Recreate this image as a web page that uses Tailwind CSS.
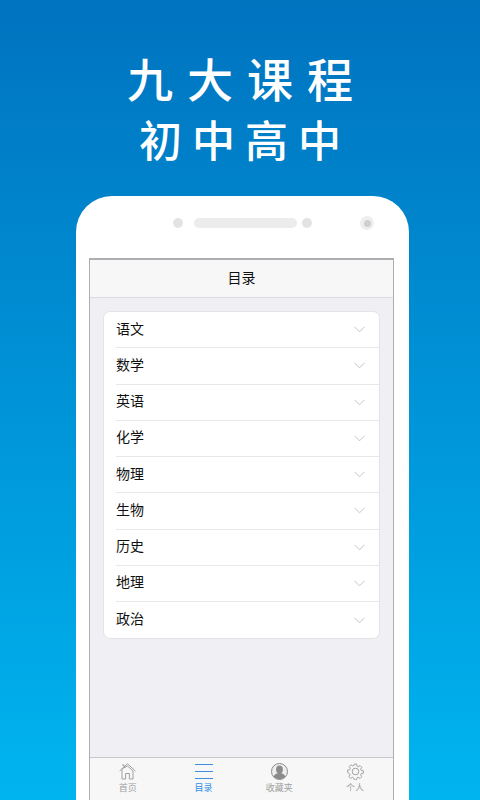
<!DOCTYPE html>
<html lang="zh">
<head>
<meta charset="UTF-8">
<script src="https://cdn.jsdelivr.net/npm/@tailwindcss/browser@4"></script>
<title>目录</title>
</head>
<body class="m-0 w-[480px] h-[800px] overflow-hidden bg-gradient-to-b from-[#0073bf] to-[#00b5ef] font-['Noto_Sans_CJK_SC','Liberation_Sans',sans-serif]">
    <!-- Heading -->
    <div class="flex flex-col items-center text-white h-[196px] pt-[44px]">
        <h1 class="text-[46px] leading-[66px] tracking-[14px] pl-[14px] font-medium">九大课程</h1>
        <h2 class="text-[43px] leading-[50px] tracking-[10px] pl-[10px] mt-[3px] font-medium">初中高中</h2>
    </div>

    <!-- Phone -->
    <div class="ml-[76px] w-[333px] h-[604px] bg-white rounded-t-[36px] flex flex-col">
        <div class="h-[62px] relative">
            <span class="absolute left-[97px] top-[22px] w-[10px] h-[10px] rounded-full bg-[#e3e3e3]"></span>
            <span class="absolute left-[118px] top-[22px] w-[103px] h-[10px] rounded-full bg-[#ececec]"></span>
            <span class="absolute left-[226px] top-[22px] w-[10px] h-[10px] rounded-full bg-[#e3e3e3]"></span>
            <span class="absolute left-[284px] top-[20px] w-[14px] h-[14px] rounded-full bg-[#eeeeee] flex items-center justify-center"><span class="w-[7px] h-[7px] rounded-full bg-[#cfcfcf]"></span></span>
        </div>

        <!-- Screen -->
        <div class="ml-[13px] w-[305px] flex-1 flex flex-col border-x border-t-2 border-[#aeaeb2] bg-[#efeff4]">
            <div class="h-[38px] pb-[3px] bg-[#f7f7f8] border-b border-[#dcdce0] flex items-center justify-center text-[14px] text-[#111]">目录</div>

            <div class="flex-1 px-[13px] pt-[13px]">
                <ul class="bg-white rounded-[7px] border border-[#e4e4e8] pl-[12px] text-[14px] text-[#111]">
                    <li class="h-[36.25px] flex items-center justify-between border-b border-[#e8e8e8] pr-[14px]"><span class="pb-[3px]">语文</span>
                        <svg width="11" height="7" viewBox="0 0 11 7" fill="none" stroke="#c4c4c8" stroke-width="1"><path d="M.5.8 5.5 5.8 10.5.8"/></svg>
                    </li>
                    <li class="h-[36.25px] flex items-center justify-between border-b border-[#e8e8e8] pr-[14px]"><span class="pb-[3px]">数学</span>
                        <svg width="11" height="7" viewBox="0 0 11 7" fill="none" stroke="#c4c4c8" stroke-width="1"><path d="M.5.8 5.5 5.8 10.5.8"/></svg>
                    </li>
                    <li class="h-[36.25px] flex items-center justify-between border-b border-[#e8e8e8] pr-[14px]"><span class="pb-[3px]">英语</span>
                        <svg width="11" height="7" viewBox="0 0 11 7" fill="none" stroke="#c4c4c8" stroke-width="1"><path d="M.5.8 5.5 5.8 10.5.8"/></svg>
                    </li>
                    <li class="h-[36.25px] flex items-center justify-between border-b border-[#e8e8e8] pr-[14px]"><span class="pb-[3px]">化学</span>
                        <svg width="11" height="7" viewBox="0 0 11 7" fill="none" stroke="#c4c4c8" stroke-width="1"><path d="M.5.8 5.5 5.8 10.5.8"/></svg>
                    </li>
                    <li class="h-[36.25px] flex items-center justify-between border-b border-[#e8e8e8] pr-[14px]"><span class="pb-[3px]">物理</span>
                        <svg width="11" height="7" viewBox="0 0 11 7" fill="none" stroke="#c4c4c8" stroke-width="1"><path d="M.5.8 5.5 5.8 10.5.8"/></svg>
                    </li>
                    <li class="h-[36.25px] flex items-center justify-between border-b border-[#e8e8e8] pr-[14px]"><span class="pb-[3px]">生物</span>
                        <svg width="11" height="7" viewBox="0 0 11 7" fill="none" stroke="#c4c4c8" stroke-width="1"><path d="M.5.8 5.5 5.8 10.5.8"/></svg>
                    </li>
                    <li class="h-[36.25px] flex items-center justify-between border-b border-[#e8e8e8] pr-[14px]"><span class="pb-[3px]">历史</span>
                        <svg width="11" height="7" viewBox="0 0 11 7" fill="none" stroke="#c4c4c8" stroke-width="1"><path d="M.5.8 5.5 5.8 10.5.8"/></svg>
                    </li>
                    <li class="h-[36.25px] flex items-center justify-between border-b border-[#e8e8e8] pr-[14px]"><span class="pb-[3px]">地理</span>
                        <svg width="11" height="7" viewBox="0 0 11 7" fill="none" stroke="#c4c4c8" stroke-width="1"><path d="M.5.8 5.5 5.8 10.5.8"/></svg>
                    </li>
                    <li class="h-[36.25px] flex items-center justify-between pr-[14px]"><span class="pb-[3px]">政治</span>
                        <svg width="11" height="7" viewBox="0 0 11 7" fill="none" stroke="#c4c4c8" stroke-width="1"><path d="M.5.8 5.5 5.8 10.5.8"/></svg>
                    </li>
                </ul>
            </div>

            <!-- Tab bar -->
            <div class="h-[43px] bg-[#f7f7f8] border-t border-[#c8c8cc] grid grid-cols-4 text-[9px] leading-[11px] text-[#a0a0a0]">
                <div class="flex flex-col items-center pt-[5px]">
                    <svg width="17" height="17" viewBox="0 0 17 17" fill="none" stroke="#a0a0a0" stroke-width="1"><path d="M.6 8 8.500 .8 16.400 8M3 5.800V16h3.600v-5.500h3.800V16H14V8M3 5.800 8.500 3 14 8M3 2h2v2.200"/></svg>
                    <span class="mt-[2px]">首页</span>
                </div>
                <div class="flex flex-col items-center pt-[5px] text-[#2e8ee8]">
                    <svg width="18" height="17" viewBox="0 0 18 17" fill="none" stroke="#3d8fe0" stroke-width="1"><path d="M0 1.500h18M0 8.500h18M0 15.500h18"/></svg>
                    <span class="mt-[2px]">目录</span>
                </div>
                <div class="flex flex-col items-center pt-[5px]">
                    <svg width="17" height="17" viewBox="0 0 17 17"><circle cx="8.500" cy="8.500" r="8" fill="#eee" stroke="#8a8a8a"/><ellipse cx="8.500" cy="6.500" rx="3.400" ry="3.900" fill="#8a8a8a"/><path d="M2.800 13.800c.4-2.600 2.800-3.800 5.700-3.800s5.300 1.200 5.700 3.800A7.500 7.500 0 0 1 8.500 16.200 7.500 7.500 0 0 1 2.800 13.800z" fill="#8a8a8a"/></svg>
                    <span class="mt-[2px]">收藏夹</span>
                </div>
                <div class="flex flex-col items-center pt-[5px]">
                    <svg width="17" height="17" viewBox="0 0 17 17" fill="none" stroke="#a0a0a0" stroke-width="1"><circle cx="8.500" cy="8.500" r="3.300"/><path d="M7.200 1h2.600l.4 2.200 1.300.6 1.900-1.200 1.800 1.800-1.200 1.900.6 1.300 2.200.4v2.600l-2.200.4-.6 1.300 1.200 1.900-1.800 1.800-1.900-1.200-1.300.6-.4 2-2.600 0-.4-2-1.300-.6-1.900 1.200-1.800-1.800 1.200-1.900-.6-1.300L.5 9.800V7.200l2.200-.4.6-1.300-1.200-1.900 1.800-1.800 1.900 1.200 1.300-.6z" transform="translate(.2 .1) scale(.96)"/></svg>
                    <span class="mt-[2px]">个人</span>
                </div>
            </div>
        </div>
    </div>
</body>
</html>
